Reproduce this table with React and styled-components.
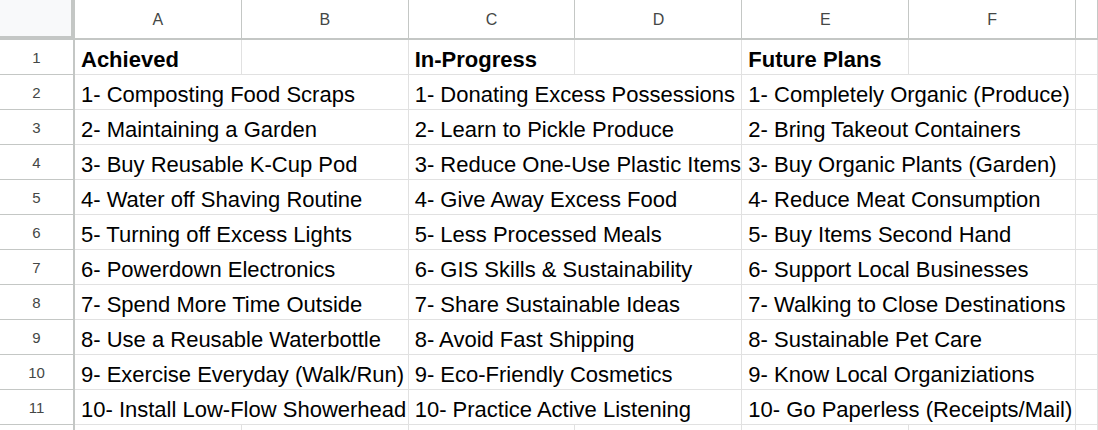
import React from "react";
import styled, { createGlobalStyle } from "styled-components";

const Global = createGlobalStyle`
  html, body { margin: 0; padding: 0; background: #fff; }
  body { font-family: "Liberation Sans", Arial, sans-serif; overflow: hidden; }
`;

const Sheet = styled.div`
  display: grid;
  grid-template-columns: 75px repeat(6, 1fr) 22px;
  grid-auto-rows: 35px;
  grid-template-rows: 40px;
  width: 1098px;
  height: 430px;
  overflow: hidden;
`;

const Corner = styled.div`
  box-sizing: border-box;
  background: #f8f9fa;
  border-right: 4px solid #c4c7c5;
  border-bottom: 4px solid #c4c7c5;
`;

const ColHead = styled.div`
  box-sizing: border-box;
  display: flex;
  align-items: center;
  justify-content: center;
  padding-top: 1px;
  border-right: 1px solid #c4c7c5;
  border-bottom: 2px solid #c4c7c5;
  color: #444746;
  font-size: 16px;
  background: #fff;
`;

const RowHead = styled.div`
  box-sizing: border-box;
  display: flex;
  align-items: center;
  justify-content: center;
  border-right: 2px solid #c4c7c5;
  border-bottom: 1px solid #c4c7c5;
  color: #444746;
  font-size: 15px;
  background: #fff;
`;

const Cell = styled.div`
  box-sizing: border-box;
  grid-column: span ${(p) => p.$span || 1};
  display: flex;
  align-items: flex-end;
  padding: 0 0 3px 6px;
  border-right: 1px solid #e1e1e1;
  border-bottom: 1px solid #e1e1e1;
  font-size: 22px;
  line-height: 22px;
  color: #000;
  font-weight: ${(p) => (p.$bold ? 700 : 400)};
  white-space: nowrap;
  overflow: visible;
  min-width: 0;
`;

const cols = ["A", "B", "C", "D", "E", "F", ""];

const rows = [
  ["1- Composting Food Scraps", "1- Donating Excess Possessions", "1- Completely Organic (Produce)"],
  ["2- Maintaining a Garden", "2- Learn to Pickle Produce", "2- Bring Takeout Containers"],
  ["3- Buy Reusable K-Cup Pod", "3- Reduce One-Use Plastic Items", "3- Buy Organic Plants (Garden)"],
  ["4- Water off Shaving Routine", "4- Give Away Excess Food", "4- Reduce Meat Consumption"],
  ["5- Turning off Excess Lights", "5- Less Processed Meals", "5- Buy Items Second Hand"],
  ["6- Powerdown Electronics", "6- GIS Skills & Sustainability", "6- Support Local Businesses"],
  ["7- Spend More Time Outside", "7- Share Sustainable Ideas", "7- Walking to Close Destinations"],
  ["8- Use a Reusable Waterbottle", "8- Avoid Fast Shipping", "8- Sustainable Pet Care"],
  ["9- Exercise Everyday (Walk/Run)", "9- Eco-Friendly Cosmetics", "9- Know Local Organiziations"],
  ["10- Install Low-Flow Showerhead", "10- Practice Active Listening", "10- Go Paperless (Receipts/Mail)"],
];

export default function App() {
  return (
    <>
      <Global />
      <Sheet>
        <Corner />
        {cols.map((c, i) => (
          <ColHead key={i}>{c}</ColHead>
        ))}

        <RowHead>1</RowHead>
        <Cell $bold>Achieved</Cell>
        <Cell />
        <Cell $bold>In-Progress</Cell>
        <Cell />
        <Cell $bold>Future Plans</Cell>
        <Cell />
        <Cell />

        {rows.map((r, i) => (
          <React.Fragment key={i}>
            <RowHead>{i + 2}</RowHead>
            {r.map((t, j) => (
              <Cell key={j} $span={2}>{t}</Cell>
            ))}
            <Cell />
          </React.Fragment>
        ))}

        <RowHead />
        {[0, 1, 2, 3, 4, 5, 6].map((k) => (
          <Cell key={k} />
        ))}
      </Sheet>
    </>
  );
}
